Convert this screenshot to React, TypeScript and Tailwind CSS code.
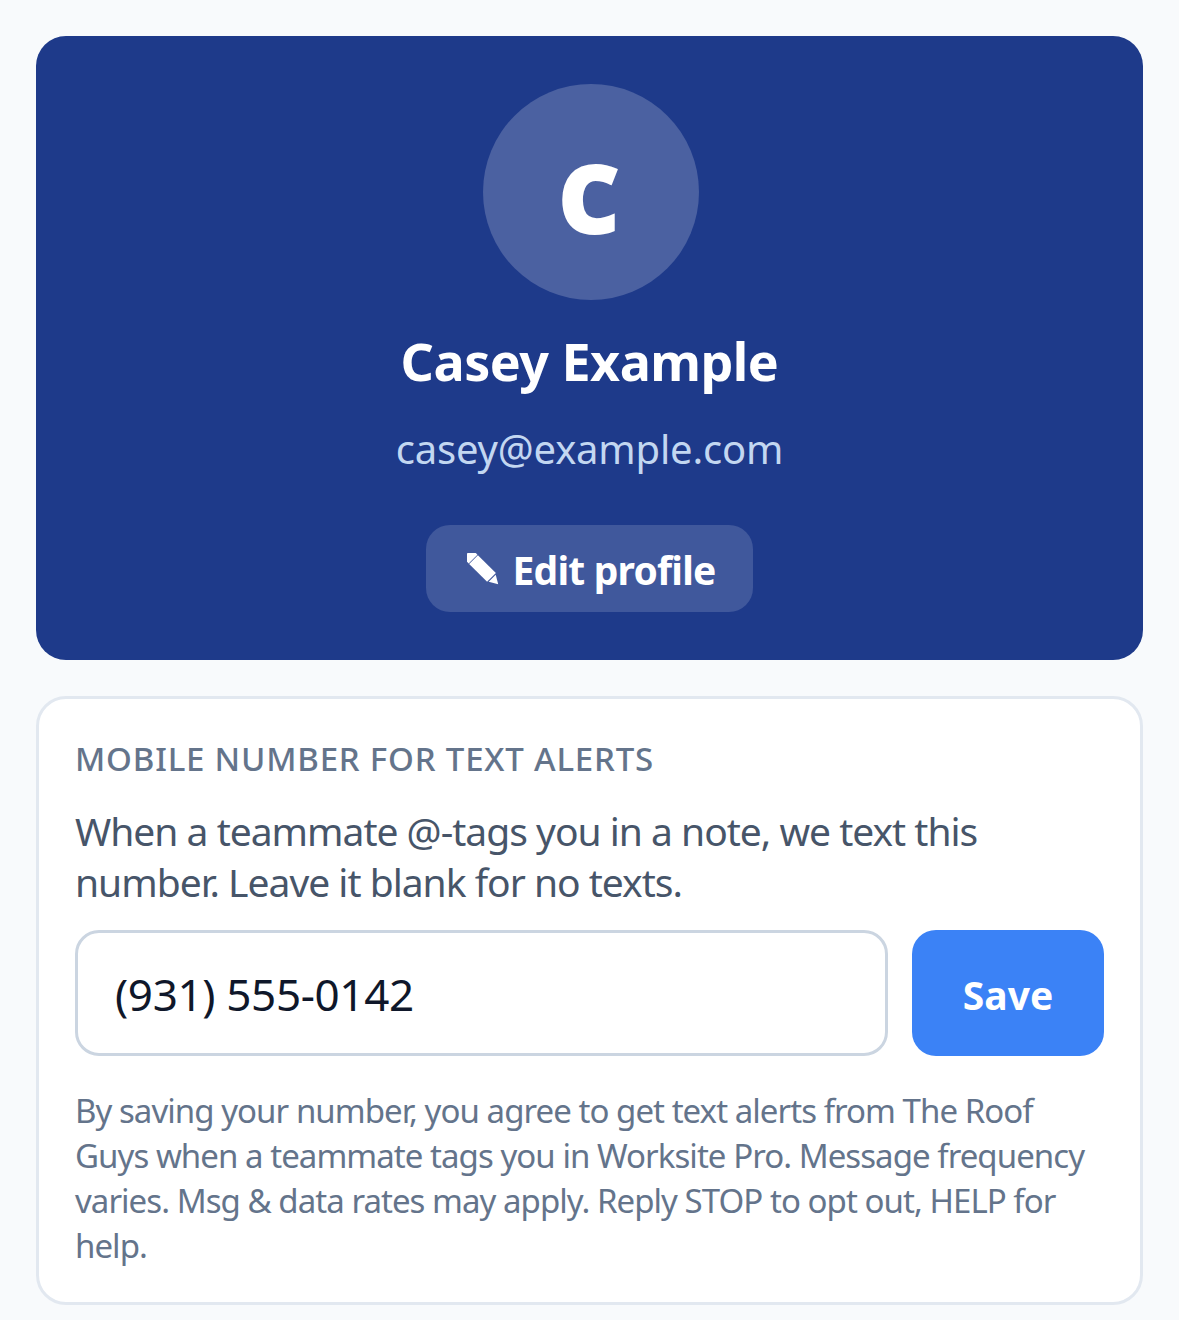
export default function App() {
  return (
    <div className="min-h-[1320px] bg-[#f8fafc] p-9 flex flex-col gap-9 font-['Noto_Sans',sans-serif]">
      <div className="bg-[#1e3a8a] rounded-[30px] pt-12 pb-12 flex flex-col items-center">
        <div className="ml-[2px] w-[216px] h-[216px] rounded-full bg-[#4b61a1] flex items-center justify-center text-white font-black text-[94px] leading-none pt-[10px] pr-[3px] [-webkit-text-stroke:2px_white]">C</div>
        <div className="mt-[25px] text-white font-bold text-[52px] leading-[72px] tracking-[-0.5px]">Casey Example</div>
        <div className="mt-[23px] text-[#c3d7f1] text-[40px] leading-[58px] tracking-[-0.2px]">casey@example.com</div>
        <div className="mt-[47px] h-[87px] w-[327px] rounded-[24px] bg-[#40589c] flex items-center justify-center gap-[14px] pl-[3px] pt-[4px] text-white font-bold text-[39px] tracking-[-0.8px]">
          <svg viewBox="0 0 32 32" className="w-[32px] h-[32px] -mt-[3px]" fill="#fff">
            <g transform="rotate(-45 16 16)">
              <path d="M9.8 1.9V0a6.2 6.2 0 0 1 12.4 0v1.9z" />
              <path d="M9.8 2.6h12.4V28H9.8z" />
              <path d="M11 29h10L16 37.5z" />
            </g>
          </svg>
          Edit profile
        </div>
      </div>
      <div className="bg-white rounded-[30px] border-[3px] border-[#e2e8f0] px-9 pt-[35px] pb-[34px] flex flex-col">
        <div className="text-[#64748b] font-[550] text-[33px] tracking-[0.8px]">MOBILE NUMBER FOR TEXT ALERTS</div>
        <div className="mt-[21px] text-[#475569] text-[39px] leading-[51px] tracking-[-1px]">When a teammate @-tags you in a note, we text this number. Leave it blank for no texts.</div>
        <div className="mt-[23px] flex gap-6">
          <div className="flex-1 h-[126px] rounded-[24px] border-[3px] border-[#cbd5e1] pl-[37px] pr-9 pt-[2px] flex items-center text-[#0f172a] text-[44px] tracking-[-0.35px]">(931) 555-0142</div>
          <div className="w-[192px] h-[126px] rounded-[24px] bg-[#3b82f6] text-white font-bold text-[39px] pt-[6px] flex items-center justify-center">Save</div>
        </div>
        <div className="mt-[32px] text-[#64748b] text-[33px] leading-[45px] tracking-[-0.95px]">By saving your number, you agree to get text alerts from The Roof Guys when a teammate tags you in Worksite Pro. Message frequency varies. Msg &amp; data rates may apply. Reply STOP to opt out, HELP for help.</div>
      </div>
    </div>
  );
}
